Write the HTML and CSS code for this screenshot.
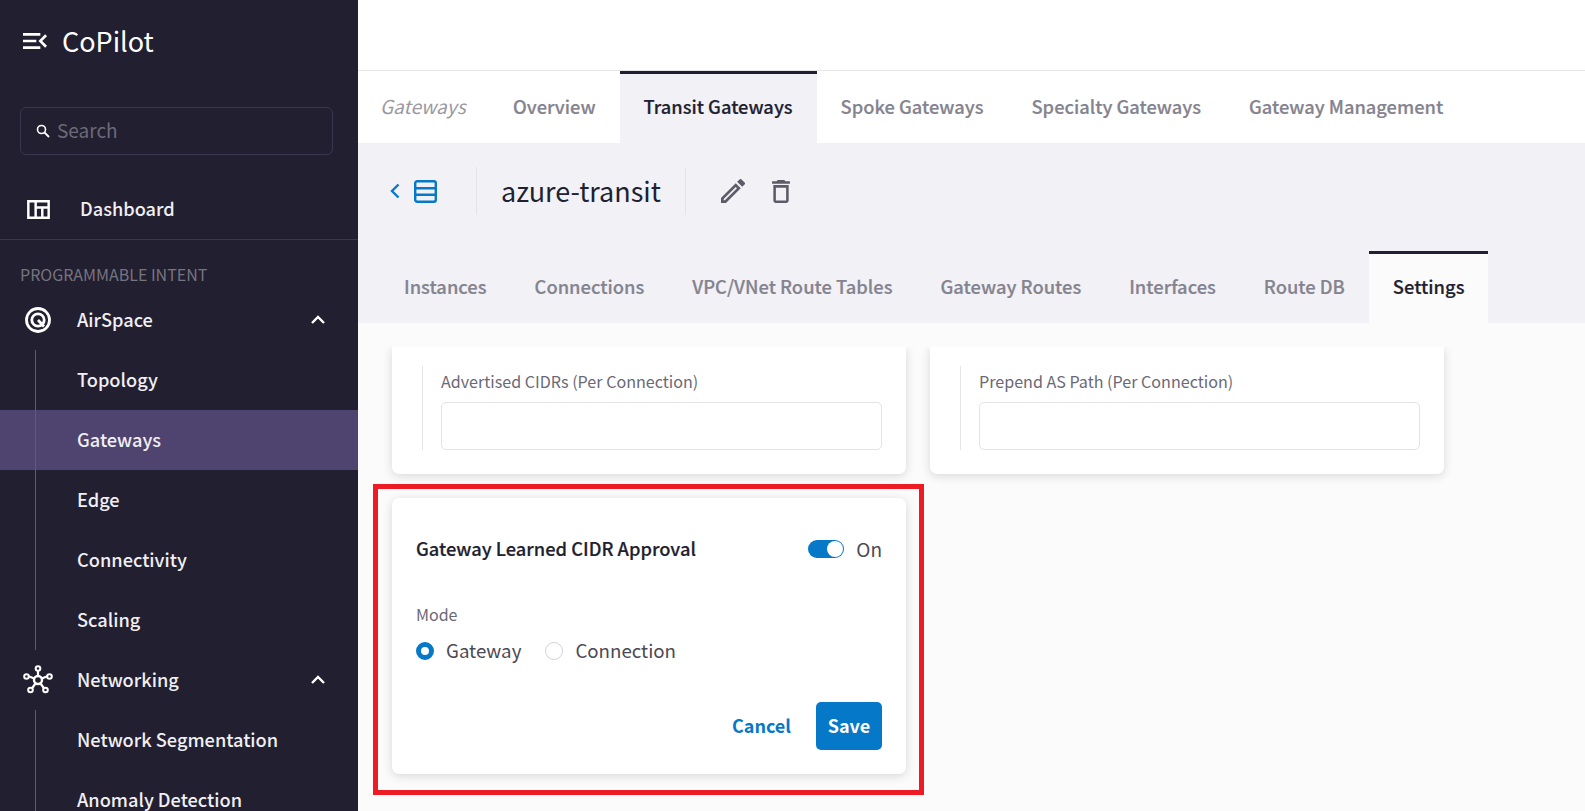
FILE: index.html
```html
<!DOCTYPE html>
<html>

<head>
  <meta charset="UTF-8">
  <meta name="viewport" content="width=device-width, initial-scale=1">
  <title>CoPilot - Gateways</title>
  <link rel="stylesheet" href="styles.css">
</head>

<body>
  <aside class="sidebar">
    <div class="brand">
      <svg class="brand-icon" width="24" height="16" viewBox="3 6 18 12">
        <path d="M3 18h13v-2H3v2zm0-5h10v-2H3v2zm0-7v2h13V6H3zm18 9.590L17.420 12 21 8.410 19.590 7l-5 5 5 5L21 15.590z" fill="#fff"/>
      </svg>
      <span class="brand-name">CoPilot</span>
    </div>

    <div class="search">
      <svg width="14" height="14" viewBox="0 0 14 14">
        <circle cx="5.500" cy="5.500" r="4" stroke="#fff" stroke-width="1.600" fill="none"/>
        <path d="M8.500 8.500L13 13" stroke="#fff" stroke-width="1.800"/>
      </svg>
      <span>Search</span>
    </div>

    <a class="nav-dash">
      <svg class="nav-icon" width="23" height="19" viewBox="0 0 24 20">
        <path d="M1.300 1.300h21.400v17.400H1.300zM9 1.300v17.400M9 8h13.700M16 8v10.700" stroke="#fff" stroke-width="2.600" fill="none"/>
      </svg>
      <span>Dashboard</span>
    </a>

    <div class="nav-label">PROGRAMMABLE INTENT</div>

    <a class="nav-group">
      <svg class="group-icon" width="30" height="30" viewBox="0 0 30 30">
        <circle cx="15" cy="15" r="11.500" stroke="#fff" stroke-width="2.800" fill="none"/>
        <circle cx="15" cy="15" r="6.200" stroke="#fff" stroke-width="2.800" fill="none"/>
        <path d="M15 15l6 6.500" stroke="#fff" stroke-width="2.800"/>
      </svg>
      <span class="group-name">AirSpace</span>
      <svg class="chev" width="16" height="10" viewBox="0 0 16 10">
        <path d="M2 8l6-6 6 6" stroke="#fff" stroke-width="2.400" fill="none"/>
      </svg>
    </a>
    <div class="nav-sub">
      <a>Topology</a>
      <a class="active">Gateways</a>
      <a>Edge</a>
      <a>Connectivity</a>
      <a>Scaling</a>
    </div>

    <a class="nav-group">
      <svg class="group-icon" width="30" height="30" viewBox="0 0 30 30">
        <path d="M15 15V5M15 15L5 11M15 15l10-4M15 15l-6.500 9M15 15l6.500 9" stroke="#fff" stroke-width="2.200"/>
        <circle cx="15" cy="15" r="4" fill="#221f30" stroke="#fff" stroke-width="2.400"/>
        <circle cx="15" cy="3.500" r="2.300" fill="#221f30" stroke="#fff" stroke-width="2"/>
        <circle cx="3.500" cy="11.500" r="2.300" fill="#221f30" stroke="#fff" stroke-width="2"/>
        <circle cx="26.500" cy="11.500" r="2.300" fill="#221f30" stroke="#fff" stroke-width="2"/>
        <circle cx="7.500" cy="25" r="2.300" fill="#221f30" stroke="#fff" stroke-width="2"/>
        <circle cx="22.500" cy="25" r="2.300" fill="#221f30" stroke="#fff" stroke-width="2"/>
      </svg>
      <span class="group-name">Networking</span>
      <svg class="chev" width="16" height="10" viewBox="0 0 16 10">
        <path d="M2 8l6-6 6 6" stroke="#fff" stroke-width="2.400" fill="none"/>
      </svg>
    </a>
    <div class="nav-sub">
      <a>Network Segmentation</a>
      <a>Anomaly Detection</a>
    </div>
  </aside>

  <main class="main">
    <div class="topbar"></div>

    <nav class="tabs">
      <span class="crumb">Gateways</span>
      <a class="tab">Overview</a>
      <a class="tab active">Transit Gateways</a>
      <a class="tab">Spoke Gateways</a>
      <a class="tab">Specialty Gateways</a>
      <a class="tab">Gateway Management</a>
    </nav>

    <section class="panel">
      <div class="gw-head">
        <div class="gw-back">
          <svg width="10" height="16" viewBox="0 0 10 16">
            <path d="M8.500 1.500L2 8l6.500 6.500" stroke="#0678c8" stroke-width="2.400" fill="none"/>
          </svg>
          <svg width="23" height="23" viewBox="0 0 23 23">
            <rect x="1.200" y="1.200" width="20.600" height="20.600" rx="2" stroke="#0678c8" stroke-width="2.400" fill="none"/>
            <path d="M1 8.200h21M1 14.800h21" stroke="#0678c8" stroke-width="2.400"/>
          </svg>
        </div>
        <h1 class="gw-name">azure-transit</h1>
        <div class="gw-actions">
          <svg width="24" height="24" viewBox="3 3 18 18">
            <path d="M3 17.250V21h3.750L17.810 9.940l-3.750-3.750L3 17.250zM5.920 19H5v-.920l9.060-9.060.920.920L5.920 19zM20.710 7.040a.996.996 0 000-1.410l-2.340-2.340a.996.996 0 00-1.410 0l-1.830 1.830 3.750 3.750 1.830-1.830z" fill="#5e5b68"/>
          </svg>
          <svg width="18" height="23" viewBox="5 3 14 18">
            <path d="M6 19c0 1.100.9 2 2 2h8c1.100 0 2-.9 2-2V7H6v12zM8 9h8v10H8V9zm7.500-5l-1-1h-5l-1 1H5v2h14V4z" fill="#5e5b68"/>
          </svg>
        </div>
      </div>

      <nav class="subtabs">
        <a class="tab">Instances</a>
        <a class="tab">Connections</a>
        <a class="tab">VPC/VNet Route Tables</a>
        <a class="tab">Gateway Routes</a>
        <a class="tab">Interfaces</a>
        <a class="tab">Route DB</a>
        <a class="tab active">Settings</a>
      </nav>
    </section>

    <section class="content">
      <div class="card-grid">
        <div class="card card-clipped">
          <div class="field">
            <label>Advertised CIDRs (Per Connection)</label>
            <div class="input"></div>
          </div>
        </div>
        <div class="card card-clipped">
          <div class="field">
            <label>Prepend AS Path (Per Connection)</label>
            <div class="input"></div>
          </div>
        </div>

        <div class="card card-approval">
          <div class="highlight"></div>
          <div class="approval-head">
            <h3>Gateway Learned CIDR Approval</h3>
            <div class="toggle-wrap">
              <span class="toggle"><span class="knob"></span></span>
              <span class="toggle-text">On</span>
            </div>
          </div>
          <div class="mode-label">Mode</div>
          <div class="radios">
            <span class="radio checked"></span><span class="radio-text">Gateway</span>
            <span class="radio"></span><span class="radio-text">Connection</span>
          </div>
          <div class="actions">
            <a class="cancel">Cancel</a>
            <a class="save">Save</a>
          </div>
        </div>
      </div>
    </section>
  </main>
</body>

</html>
```

FILE: styles.css
```css
* {
  box-sizing: border-box;
}

body {
  margin: 0;
  height: 811px;
  overflow: hidden;
  display: flex;
  font-family: "Noto Sans CJK SC", "Noto Sans", sans-serif;
  font-size: 18.300px;
  line-height: 28px;
  background-color: #fff;
  color: #221f30;
}

/* sidebar */
.sidebar {
  width: 358px;
  flex-shrink: 0;
  height: 811px;
  overflow: hidden;
  background-color: #221f30;
  color: #f0eff3;
  font-size: 18.200px;
  font-weight: 500;
}

.brand {
  display: flex;
  align-items: center;
  height: 82px;
  padding-left: 23px;
}

.brand-name {
  margin-left: 15px;
  font-size: 27px;
  font-weight: 400;
  color: #fff;
}

.search {
  display: flex;
  align-items: center;
  gap: 7px;
  width: 313px;
  height: 48px;
  margin: 25px 0 0 20px;
  padding-left: 15px;
  border: 1px solid #3a3550;
  border-radius: 6px;
  color: #6d6a77;
  font-size: 19px;
  font-weight: 400;
}

.search span {
  padding-bottom: 2px;
}

.nav-dash {
  display: flex;
  align-items: center;
  height: 85px;
  padding: 24px 0 0 27px;
  border-bottom: 1px solid #3a3550;
}

.nav-dash span {
  margin-left: 30px;
  padding-bottom: 2px;
}

.nav-label {
  height: 50px;
  padding: 19px 0 0 20px;
  font-size: 16px;
  line-height: 30px;
  font-weight: 400;
  color: #76747f;
}

.nav-group {
  display: flex;
  align-items: center;
  height: 60px;
  padding-left: 23px;
}

.group-icon {
  margin-right: 24px;
}

.group-name {
  padding-bottom: 2px;
}

.chev {
  margin-left: auto;
  margin-right: 32px;
}

.nav-sub a {
  display: block;
  height: 60px;
  padding-left: 77px;
  line-height: 58px;
  background-image: linear-gradient(#5f5c6b, #5f5c6b);
  background-size: 1px 100%;
  background-position: 35px 0;
  background-repeat: no-repeat;
}

.nav-sub a.active {
  background-color: #4f4470;
}

/* main column */
.main {
  flex: 1;
  min-width: 0;
  background-color: #fbfbfb;
}

.topbar {
  height: 71px;
  background-color: #fff;
  border-bottom: 1px solid #e6e6e9;
}

.tabs {
  display: flex;
  height: 72px;
  padding-left: 22px;
  background-color: #fff;
  align-items: stretch;
}

.crumb {
  width: 109px;
  line-height: 70px;
  font-style: italic;
  font-size: 19px;
  color: #9a98a2;
}

.tab {
  padding: 0 24px;
  line-height: 64px;
  font-weight: 500;
  color: #85838f;
  border-top: 3px solid transparent;
  -webkit-text-stroke: 0.2px currentColor;
}

.tab.active {
  background-color: #f1f1f6;
  border-top-color: #221f30;
  color: #221f30;
}

.panel {
  height: 180px;
  background-color: #f1f1f6;
}

.gw-head {
  display: flex;
  align-items: center;
  height: 96px;
  margin-bottom: 12px;
}

.gw-back {
  display: flex;
  align-items: center;
  gap: 14px;
  height: 48px;
  width: 119px;
  padding-left: 32px;
  border-right: 1px solid #e3e3e8;
}

.gw-name {
  margin: 0;
  height: 48px;
  padding: 0 24px;
  border-right: 1px solid #e3e3e8;
  font-size: 27px;
  line-height: 48px;
  font-weight: 400;
}

.gw-actions {
  display: flex;
  align-items: center;
  gap: 27px;
  padding-left: 35px;
}

.subtabs {
  display: flex;
  height: 72px;
  padding-left: 22px;
  font-size: 18.350px;
}

.subtabs .tab.active {
  background-color: #fbfbfb;
}

/* settings cards */
.content {
  height: 488px;
  padding-top: 24px;
}

.card-grid {
  display: grid;
  grid-template-columns: 514px 514px;
  column-gap: 24px;
  row-gap: 24px;
  padding-left: 34px;
}

.card {
  background-color: #fff;
  border-radius: 7px;
  box-shadow: 0 2px 10px rgba(34, 31, 48, 0.16);
}

.card-clipped {
  height: 127px;
  padding: 19px 24px 0 30px;
  border-radius: 0 0 7px 7px;
  clip-path: inset(0 -14px -14px -14px);
}

.field {
  height: 84px;
  padding-left: 18px;
  border-left: 1px solid #e6e6e9;
}

.field label {
  display: block;
  height: 36px;
  font-size: 16.100px;
  line-height: 30px;
  color: #6b6975;
}

.input {
  height: 48px;
  background-color: #fff;
  border: 1px solid #e3e3e8;
  border-radius: 5px;
}

.card-approval {
  position: relative;
  height: 276px;
  padding: 37px 24px 0;
}

/* red annotation frame drawn on top of the screenshot */
.highlight {
  position: absolute;
  top: -14px;
  left: -19px;
  width: 551px;
  height: 311px;
  border: 5px solid #ed1c24;
}

.approval-head {
  display: flex;
  align-items: center;
  justify-content: space-between;
  height: 28px;
}

.approval-head h3 {
  margin: 0;
  padding-bottom: 2px;
  font-size: 18.300px;
  font-weight: 500;
  -webkit-text-stroke: 0.2px currentColor;
}

.toggle-wrap {
  display: flex;
  align-items: center;
  gap: 12px;
  color: #4b4955;
  font-size: 19px;
}

.toggle-text {
  padding-bottom: 1px;
}

.toggle {
  display: block;
  width: 36px;
  height: 18px;
  padding: 1px 1px 1px 19px;
  border-radius: 9px;
  background-color: #0678c8;
}

.knob {
  display: block;
  width: 16px;
  height: 16px;
  border-radius: 50%;
  background-color: #fff;
}

.mode-label {
  margin-top: 37px;
  height: 28px;
  font-size: 16px;
  color: #6b6975;
}

.radios {
  display: flex;
  align-items: center;
  margin-top: 9px;
  height: 28px;
  font-size: 18.700px;
  color: #4b4955;
}

.radio {
  width: 18px;
  height: 18px;
  margin-right: 12px;
  border: 1px solid #d3d3da;
  border-radius: 50%;
}

.radio.checked {
  border: 5px solid #0678c8;
}

.radio-text {
  margin-right: 24px;
  padding-bottom: 2px;
}

.actions {
  display: flex;
  align-items: center;
  justify-content: flex-end;
  margin-top: 37px;
  gap: 25px;
  font-size: 18px;
  font-weight: 700;
}

.cancel {
  color: #0678c8;
  padding-bottom: 2px;
}

.save {
  display: block;
  width: 66px;
  height: 48px;
  border-radius: 5px;
  background-color: #0678c8;
  color: #fff;
  text-align: center;
  line-height: 47px;
}
```
